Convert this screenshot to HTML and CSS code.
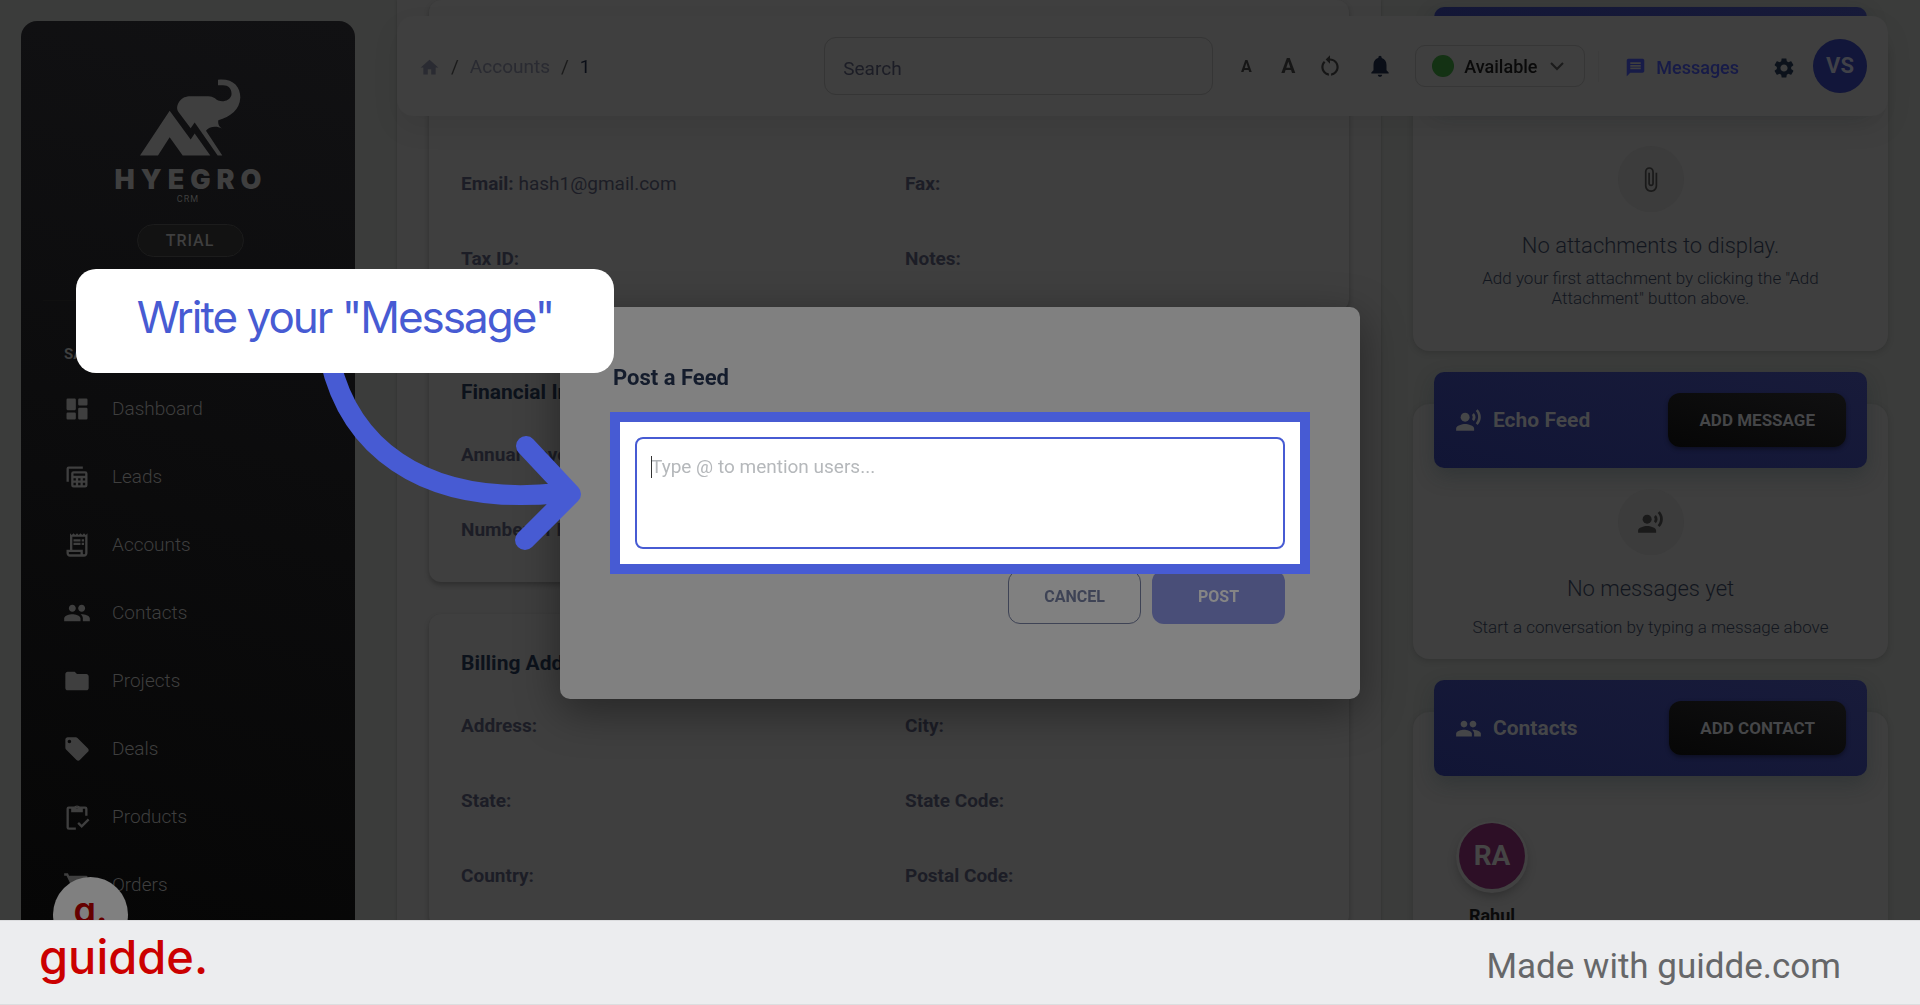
FILE: index.html
```html
<!DOCTYPE html>
<html lang="en">
<head>
  <meta charset="UTF-8">
  <meta name="viewport" content="width=device-width, initial-scale=1">
  <title>Hyegro CRM - Account</title>
  <link rel="stylesheet" href="styles.css">
</head>
<body>
  <!-- shared icons -->
  <svg class="sprite" aria-hidden="true">
    <symbol id="i-people" viewBox="0 0 24 24"><path d="M16 11c1.66 0 2.99-1.34 2.99-3S17.66 5 16 5c-1.66 0-3 1.34-3 3s1.34 3 3 3zm-8 0c1.66 0 2.99-1.34 2.99-3S9.66 5 8 5C6.34 5 5 6.34 5 8s1.34 3 3 3zm0 2c-2.33 0-7 1.17-7 3.5V19h14v-2.5c0-2.33-4.67-3.5-7-3.5zm8 0c-.29 0-.62.02-.97.05 1.16.84 1.97 1.97 1.97 3.45V19h6v-2.5c0-2.33-4.67-3.5-7-3.5z"/></symbol>
    <symbol id="i-voice" viewBox="0 0 24 24"><circle cx="9" cy="9" r="4"/><path d="M9 15c-2.67 0-8 1.34-8 4v2h16v-2c0-2.66-5.33-4-8-4zm7.76-9.64l-1.68 1.69c.84 1.18.84 2.71 0 3.89l1.68 1.69c2.02-2.02 2.02-5.07 0-7.27zM20.07 2l-1.63 1.63c2.77 3.02 2.77 7.56 0 10.74L20.07 16c3.9-3.89 3.91-9.95 0-14z"/></symbol>
  </svg>

  <div class="app">
    <aside class="sidebar">
      <div class="brand">
        <svg class="brand-mark" viewBox="423 237 303 230">
          <path d="M423 466L512 332L575 418L587 400L634 466H551L512 411L477 466Z"/>
          <path d="M657 239C700 234 724 258 724 292C722 330 694 350 658 360C656 372 660 380 669 385C650 376 630 380 621 392L670 466H656L587 367L575 384L540 338C530 326 534 312 544 300C555 289 565 288 580 288H628C645 288 650 298 660 302C676 306 692 300 697 286C700 268 690 255 672 255H657Z"/>
        </svg>
        <span class="brand-name">HYEGRO</span>
        <span class="brand-sub">CRM</span>
      </div>
      <span class="plan">TRIAL</span>
      <hr class="rule">
      <h6 class="nav-title">SALES</h6>
      <nav class="nav">
        <a href="#"><svg viewBox="0 0 24 24"><path d="M4 13h6a1 1 0 0 0 1-1V4a1 1 0 0 0-1-1H4a1 1 0 0 0-1 1v8a1 1 0 0 0 1 1zm0 8h6a1 1 0 0 0 1-1v-4a1 1 0 0 0-1-1H4a1 1 0 0 0-1 1v4a1 1 0 0 0 1 1zm10 0h6a1 1 0 0 0 1-1v-8a1 1 0 0 0-1-1h-6a1 1 0 0 0-1 1v8a1 1 0 0 0 1 1zM13 4v4a1 1 0 0 0 1 1h6a1 1 0 0 0 1-1V4a1 1 0 0 0-1-1h-6a1 1 0 0 0-1 1z"/></svg>Dashboard</a>
        <a href="#"><svg viewBox="0 0 24 24"><path fill="none" stroke="currentColor" stroke-width="2" d="M4 16V5a1 1 0 0 1 1-1h12"/><path fill-rule="evenodd" d="M9 7h10a2 2 0 0 1 2 2v10a2 2 0 0 1-2 2H9a2 2 0 0 1-2-2V9a2 2 0 0 1 2-2zM9 9v2h10V9zM9 13v2h2v-2zm4 0v2h2v-2zm4 0v2h2v-2zM9 17v2h2v-2zm4 0v2h2v-2zm4 0v2h2v-2z"/></svg>Leads</a>
        <a href="#"><svg viewBox="0 0 24 24"><path d="M19.5 3.5L18 2l-1.500 1.500L15 2l-1.500 1.500L12 2l-1.500 1.500L9 2 7.500 3.500 6 2v14H3v3c0 1.660 1.340 3 3 3h12c1.660 0 3-1.340 3-3V2l-1.500 1.500zM15 20H6c-.55 0-1-.45-1-1v-1h10v2zm4-1c0 .55-.45 1-1 1s-1-.45-1-1v-3H8V5h11v14z"/><path d="M9 7h6v2H9zM16 7h2v2h-2zM9 10h6v2H9zM16 10h2v2h-2z"/></svg>Accounts</a>
        <a href="#"><svg><use href="#i-people"/></svg>Contacts</a>
        <a href="#"><svg viewBox="0 0 24 24"><path d="M10 4H4c-1.100 0-1.990.9-1.990 2L2 18c0 1.100.9 2 2 2h16c1.100 0 2-.9 2-2V8c0-1.100-.9-2-2-2h-8l-2-2z"/></svg>Projects</a>
        <a href="#"><svg viewBox="0 0 24 24"><path d="M21.410 11.580l-9-9C12.050 2.220 11.550 2 11 2H4c-1.100 0-2 .9-2 2v7c0 .55.22 1.050.59 1.420l9 9c.36.36.86.58 1.410.58.55 0 1.050-.22 1.410-.59l7-7c.37-.36.59-.86.59-1.410 0-.55-.23-1.060-.59-1.420zM5.500 7C4.670 7 4 6.330 4 5.500S4.670 4 5.500 4 7 4.670 7 5.500 6.330 7 5.500 7z"/></svg>Deals</a>
        <a href="#"><svg viewBox="0 0 24 24"><path fill="none" stroke="currentColor" stroke-width="2" d="M11 22H5a1 1 0 0 1-1-1V5a1 1 0 0 1 1-1h14a1 1 0 0 1 1 1v6M13 17l3 3 6-6"/><path fill-rule="evenodd" d="M7 4h2.200a3 3 0 0 1 5.600 0H17v4H7zm5-1a1 1 0 1 0 0 2 1 1 0 0 0 0-2z"/></svg>Products</a>
        <a href="#"><svg viewBox="0 0 24 24"><path d="M7 18c-1.100 0-1.990.9-1.990 2S5.900 22 7 22s2-.9 2-2-.9-2-2-2zM1 2v2h2l3.600 7.590-1.350 2.450c-.16.28-.25.61-.25.96 0 1.100.9 2 2 2h12v-2H7.420c-.14 0-.25-.11-.25-.25l.03-.12.9-1.630h7.450c.75 0 1.410-.41 1.750-1.030l3.580-6.490A1 1 0 0 0 20 4H5.210l-.94-2H1zm16 16c-1.100 0-1.990.9-1.990 2s.89 2 1.990 2 2-.9 2-2-.9-2-2-2z"/></svg>Orders</a>
      </nav>
    </aside>

    <div class="workspace">
      <header class="topbar">
        <nav class="crumbs">
          <a href="#" aria-label="Home"><svg viewBox="0 0 24 24"><path d="M10 20v-6h4v6h5v-8h3L12 3 2 12h3v8z"/></svg></a>
          <span>/</span>
          <a href="#">Accounts</a>
          <span>/</span>
          <b>1</b>
        </nav>
        <input class="search" type="search" placeholder="Search" aria-label="Search">
        <div class="tools">
          <button class="tool font-small" type="button">A</button>
          <button class="tool font-large" type="button">A</button>
          <button class="tool" type="button" aria-label="Reset"><svg viewBox="0 0 24 24"><path d="M12 5V2L8 6l4 4V7c3.310 0 6 2.690 6 6 0 2.970-2.170 5.430-5 5.910v2.020c3.950-.49 7-3.850 7-7.930 0-4.420-3.580-8-8-8zM6 13c0-1.650.67-3.150 1.760-4.240L6.340 7.340C4.900 8.790 4 10.790 4 13c0 4.080 3.050 7.440 7 7.930v-2.020c-2.830-.48-5-2.940-5-5.910z"/></svg></button>
          <button class="tool bell" type="button" aria-label="Notifications"><svg viewBox="0 0 24 24"><path d="M12 22c1.100 0 2-.9 2-2h-4c0 1.100.89 2 2 2zm6-6v-5c0-3.070-1.640-5.640-4.500-6.320V4c0-.83-.67-1.500-1.500-1.500s-1.500.67-1.500 1.500v.68C7.630 5.360 6 7.920 6 11v5l-2 2v1h16v-1l-2-2z"/></svg></button>
        </div>
        <label class="status">
          <i class="dot"></i>
          <select aria-label="Status">
            <option>Available</option>
            <option>Away</option>
          </select>
          <svg viewBox="0 0 14 9"><path d="M1 1l6 6 6-6"/></svg>
        </label>
        <a class="messages" href="#"><svg viewBox="0 0 24 24"><path d="M20 2H4c-1.100 0-1.990.9-1.990 2L2 22l4-4h14c1.100 0 2-.9 2-2V4c0-1.100-.9-2-2-2zm-2 12H6v-2h12v2zm0-3H6V9h12v2zm0-3H6V6h12v2z"/></svg>Messages</a>
        <button class="tool gear" type="button" aria-label="Settings"><svg viewBox="0 0 24 24"><path d="M19.140 12.940c.04-.3.06-.61.06-.94 0-.32-.02-.64-.07-.94l2.030-1.580c.18-.14.23-.41.12-.61l-1.920-3.320c-.12-.22-.37-.29-.59-.22l-2.390.96c-.5-.38-1.030-.7-1.620-.94l-.36-2.540c-.04-.24-.24-.41-.48-.41h-3.840c-.24 0-.43.17-.47.41l-.36 2.540c-.59.24-1.130.57-1.620.94l-2.390-.96c-.22-.08-.47 0-.59.22L2.740 8.870c-.12.21-.08.47.12.61l2.030 1.580c-.05.3-.09.63-.09.94s.02.64.07.94l-2.030 1.580c-.18.14-.23.41-.12.61l1.920 3.320c.12.22.37.29.59.22l2.390-.96c.5.38 1.030.7 1.620.94l.36 2.540c.05.24.24.41.48.41h3.840c.24 0 .44-.17.47-.41l.36-2.540c.59-.24 1.130-.56 1.620-.94l2.390.96c.22.08.47 0 .59-.22l1.920-3.320c.12-.22.07-.47-.12-.61l-2.010-1.580zM12 15.600c-1.980 0-3.600-1.620-3.600-3.600s1.620-3.600 3.600-3.600 3.600 1.620 3.600 3.600-1.620 3.600-3.600 3.600z"/></svg></button>
        <span class="user">VS</span>
      </header>

      <main class="details">
        <section class="panel panel-top">
          <dl class="fields">
            <div><dt>Email:</dt> <dd>hash1@gmail.com</dd></div>
            <div><dt>Fax:</dt></div>
            <div><dt>Tax ID:</dt></div>
            <div><dt>Notes:</dt></div>
          </dl>
        </section>
        <section class="panel">
          <h2>Financial Information</h2>
          <dl class="fields">
            <div><dt>Annual Revenue:</dt></div>
            <div></div>
            <div><dt>Number of Employees:</dt></div>
            <div></div>
          </dl>
        </section>
        <section class="panel">
          <h2>Billing Address</h2>
          <dl class="fields">
            <div><dt>Address:</dt></div>
            <div><dt>City:</dt></div>
            <div><dt>State:</dt></div>
            <div><dt>State Code:</dt></div>
            <div><dt>Country:</dt></div>
            <div><dt>Postal Code:</dt></div>
          </dl>
        </section>
      </main>

      <aside class="cards">
        <section class="card card-attach">
          <div class="card-bar"></div>
          <div class="empty">
            <span class="empty-icon"><svg viewBox="0 0 24 24"><path d="M16.500 6v11.500c0 2.210-1.790 4-4 4s-4-1.790-4-4V5c0-1.380 1.120-2.500 2.500-2.500s2.500 1.120 2.500 2.500v10.500c0 .55-.45 1-1 1s-1-.45-1-1V6H10v9.500c0 1.380 1.120 2.500 2.500 2.500s2.500-1.120 2.500-2.500V5c0-2.210-1.790-4-4-4S7 2.790 7 5v12.500c0 3.040 2.460 5.500 5.500 5.500s5.500-2.460 5.500-5.500V6h-1.500z"/></svg></span>
            <h3>No attachments to display.</h3>
            <p>Add your first attachment by clicking the "Add Attachment" button above.</p>
          </div>
        </section>
        <section class="card card-feed">
          <div class="card-bar">
            <svg><use href="#i-voice"/></svg>
            <h2>Echo Feed</h2>
            <button type="button">ADD MESSAGE</button>
          </div>
          <div class="empty">
            <span class="empty-icon"><svg><use href="#i-voice"/></svg></span>
            <h3>No messages yet</h3>
            <p>Start a conversation by typing a message above</p>
          </div>
        </section>
        <section class="card">
          <div class="card-bar">
            <svg><use href="#i-people"/></svg>
            <h2>Contacts</h2>
            <button type="button">ADD CONTACT</button>
          </div>
          <div class="contact">
            <span class="contact-avatar">RA</span>
            <span>Rahul</span>
          </div>
        </section>
      </aside>
    </div>

    <div class="widget">g.</div>
  </div>

  <div class="overlay">
    <form class="modal" role="dialog" aria-labelledby="feed-title">
      <h2 id="feed-title">Post a Feed</h2>
      <div class="highlight">
        <textarea placeholder="Type @ to mention users..." aria-label="Message"></textarea>
        <i class="caret"></i>
      </div>
      <div class="actions">
        <button class="cancel" type="button">CANCEL</button>
        <button class="post" type="submit">POST</button>
      </div>
    </form>
  </div>

  <!-- walkthrough hint -->
  <svg class="arrow" viewBox="310 360 280 200">
    <path d="M330 360C348 440 415 508 560 493M526 446L571 494L525 540"/>
  </svg>
  <div class="hint">Write your "Message"</div>

  <footer class="footer">
    <a class="guidde" href="#">guidde.</a>
    <span>Made with guidde.com</span>
  </footer>
</body>
</html>
```
FILE: styles.css
```css
* { box-sizing: border-box; }
body {
  margin: 0; height: 100vh; overflow: hidden; display: flex; flex-direction: column;
  background: #3b3c3b; color: #1c1d26; font: 18px/28px Roboto, sans-serif;
}
h2, h3, h6, p, dl, dd { margin: 0; }
a { color: inherit; text-decoration: none; }
button, input, select, textarea { font-family: inherit; color: inherit; }
button { cursor: pointer; }
svg { fill: currentColor; flex: none; }
.sprite { position: absolute; width: 0; height: 0; }

.app { position: relative; flex: 1; min-height: 0; overflow: hidden; display: flex; }

/* sidebar */
.sidebar {
  width: 334px; flex: none; margin: 21px 42px 0 21px; border-radius: 16px 16px 0 0;
  background: linear-gradient(195deg, #111113, #060606); color: #3f3f3f;
  display: flex; flex-direction: column; align-items: center; overflow: hidden;
}
.brand { display: flex; flex-direction: column; align-items: center; margin-top: 58px; }
.brand-mark { width: 101px; height: 77px; margin-left: 6px; }
.brand-name { font: 900 27px/27px Inter, sans-serif; letter-spacing: 6px; margin-top: 10px; margin-left: 6px; }
.brand-sub { font-size: 9px; line-height: 12px; letter-spacing: 1px; }
.plan {
  width: 107px; margin: 19px 0 0 4px; border: 1px solid #1c1c1c; border-radius: 17px;
  background: #121212; text-align: center; font-size: 16px; font-weight: 500; line-height: 31px; letter-spacing: 1px;
}
.rule { width: 290px; margin: 43px 0; border: 0; border-top: 1px solid #101010; }
.nav-title { align-self: flex-start; margin-left: 43px; font-size: 15px; line-height: 20px; }
.nav { align-self: stretch; display: flex; flex-direction: column; gap: 28px; margin-top: 25px; padding-left: 42px; }
.nav a { display: flex; align-items: center; gap: 21px; height: 40px; font-size: 19px; font-weight: 300; }
.nav svg { width: 28px; height: 28px; }

/* page */
.workspace {
  position: relative; flex: 1; min-width: 0; margin-right: 32px;
  display: grid; grid-template-columns: minmax(0, 1fr) 475px; gap: 32px; align-items: start;
}
.topbar {
  position: absolute; top: 16px; left: 0; right: 0; z-index: 1; height: 100px; padding: 0 21px 0 22px;
  display: flex; align-items: center; border-radius: 16px; background: #3f3f3f;
  box-shadow: 0 12px 28px rgba(0, 0, 0, .07);
}
.crumbs { display: flex; align-items: center; gap: 11px; flex: 1; padding-top: 2px; color: #2a2b32; font-size: 19px; }
.crumbs a { display: flex; }
.crumbs svg { width: 21px; height: 21px; }
.crumbs span { color: #1b1b1b; }
.crumbs b { font-weight: 400; color: #0a0e17; }
.search {
  width: 389px; height: 58px; padding: 4px 18px 0; border: 1px solid #353535; border-radius: 12px;
  background: none; font-size: 19px;
}
.search::placeholder { color: #1c1d26; }
.tools { display: flex; align-items: center; gap: 12px; margin-left: 18px; }
.tool { width: 30px; height: 30px; padding: 0; border: 0; background: none; color: #161616; display: grid; place-items: center; font-weight: 700; }
.tool svg { width: 26px; height: 26px; }
.font-small { font-size: 16px; }
.font-large { font-size: 21px; }
.bell { margin-left: 8px; color: #0a0e17; }
.status {
  width: 170px; height: 42px; margin-left: 20px; padding: 0 20px 0 16px; border: 1px solid #363636; border-radius: 10px;
  display: flex; align-items: center; gap: 10px; color: #0a0a0a;
}
.dot { width: 22px; height: 22px; border-radius: 50%; background: #143214; }
.status select { appearance: none; flex: 1; min-width: 0; border: 0; padding: 0; background: none; font-size: 18px; font-weight: 500; }
.status svg { width: 14px; height: 9px; fill: none; stroke: #1b1b1b; stroke-width: 2; }
.messages { display: flex; align-items: center; gap: 10px; margin-left: 13px; padding: 3px 0 0 26px; border-left: 1px solid #3c3c3c; color: #171b48; font-weight: 500; }
.messages svg { width: 21px; height: 21px; }
.gear { margin: 3px 0 0 30px; color: #0c121b; }
.gear svg { width: 24px; height: 24px; }
.user {
  width: 54px; height: 54px; margin-left: 14px; border-radius: 50%; background: #12163a; color: #404148;
  display: grid; place-items: center; font-size: 22px; font-weight: 700;
}

.details { padding: 0 32px 32px; background: #3e3e3e; box-shadow: 0 0 3px rgba(0, 0, 0, .2); display: flex; flex-direction: column; gap: 32px; }
.panel { padding: 32px 32px 38px; border-radius: 12px; background: #3f3f3f; box-shadow: 0 3px 5px rgba(0, 0, 0, .25); }
.panel-top { padding-top: 170px; }
.panel h2 { margin-bottom: 32px; color: #0c121b; font-size: 21px; line-height: 34px; font-weight: 700; }
.fields { display: grid; grid-template-columns: 1fr 1fr; gap: 47px 32px; font-size: 19px; }
.fields div { height: 28px; white-space: nowrap; }
.fields dt, .fields dd { display: inline; }
.fields dt { font-weight: 700; }

/* right column */
.cards { display: flex; flex-direction: column; gap: 53px; }
.card { padding: 0 21px 32px; border-radius: 16px; background: #3f3f3f; box-shadow: 0 2px 6px rgba(0, 0, 0, .15); }
.card-attach { margin-top: 39px; height: 312px; }
.card-feed { height: 255px; }
.card-bar {
  height: 96px; margin-top: -32px; padding: 0 21px; border-radius: 10px; display: flex; align-items: center;
  background: linear-gradient(195deg, #181b3a, #111535); color: #454648;
  box-shadow: 0 8px 20px rgba(20, 32, 36, .3);
}
.card-bar svg { width: 27px; height: 27px; }
.card-bar h2 { flex: 1; margin-left: 11px; font-size: 21px; font-weight: 700; }
.card-bar button {
  height: 54px; padding: 0 31px; border: 0; border-radius: 12px; background: linear-gradient(195deg, #101011, #060606);
  font-size: 17px; font-weight: 700; box-shadow: 0 2px 4px rgba(0, 0, 0, .4);
}
.empty { display: flex; flex-direction: column; align-items: center; margin-top: 21px; text-align: center; color: #12161e; font-weight: 300; }
.card-attach .empty { margin-top: 43px; }
.empty-icon { width: 66px; height: 66px; border-radius: 50%; background: #3c3c3c; color: #1a1a1a; display: grid; place-items: center; }
.empty-icon svg { width: 27px; height: 27px; }
.empty h3 { margin-top: 19px; font-size: 22px; line-height: 30px; font-weight: 300; }
.empty p { margin-top: 7px; padding: 0 40px; font-size: 17px; line-height: 20px; }
.card-feed p { margin-top: 13px; padding: 0; }
.contact { width: 90px; margin-top: 47px; margin-left: 13px; display: flex; flex-direction: column; align-items: center; gap: 13px; color: #0a0a0a; font-weight: 700; }
.contact-avatar {
  width: 66px; height: 66px; border-radius: 50%; background: #2d0f26; color: #454545;
  display: grid; place-items: center; font-size: 28px; font-weight: 700;
  box-shadow: 0 1px 0 3px #414141, 0 6px 12px rgba(0, 0, 0, .3);
}

.widget {
  position: absolute; left: 53px; bottom: -32px; width: 75px; height: 75px; border-radius: 50%;
  background: #808080; color: #650000; text-align: center; font: 600 36px/66px Inter, sans-serif;
}

/* dialog */
.overlay { position: fixed; inset: 0; display: grid; place-items: center; }
.modal { width: 800px; padding: 56px 50px 75px; border-radius: 10px; background: #808080; box-shadow: 0 12px 44px rgba(0, 0, 0, .4); }
.modal h2 { padding-left: 3px; color: #141c2c; font-size: 22px; line-height: 30px; font-weight: 700; }
.highlight { position: relative; z-index: 1; margin-top: 19px; padding: 15px; border: 10px solid #475bd3; background: #fff; }
.highlight textarea {
  display: block; width: 100%; height: 112px; padding: 14px; border: 2px solid #475bd3; border-radius: 8px;
  resize: none; outline: 0; background: none; font-size: 19px; line-height: 28px;
}
.highlight textarea::placeholder { color: #b5b8bb; }
.caret { position: absolute; top: 34px; left: 31px; width: 1px; height: 22px; background: #333; }
.actions { display: flex; justify-content: flex-end; gap: 11px; margin-top: -4px; padding-right: 25px; }
.actions button { width: 133px; height: 54px; border-radius: 12px; font-size: 16px; font-weight: 700; }
.cancel { border: 1px solid #3e4355; background: none; color: #3e4355; }
.post { border: 0; background: #494e78; color: #858585; }

.hint {
  position: absolute; left: 76px; top: 269px; width: 538px; height: 104px; border-radius: 20px; background: #fff;
  color: #475bd3; text-align: center; font: 400 44px/96px Inter, sans-serif; letter-spacing: -2px;
}
.arrow { position: absolute; left: 310px; top: 360px; width: 280px; height: 200px; fill: none; stroke: #475bd3; stroke-width: 20px; stroke-linecap: round; stroke-linejoin: round; }

.footer {
  position: relative; height: 85px; flex: none; padding: 0 79px 0 39px; display: flex; align-items: center; justify-content: space-between;
  border-top: 1px solid #dcdddf; border-bottom: 1px solid #dcdddf; background: #ecedef; color: #666769; font-size: 35px;
}
.footer span { padding-top: 8px; }
.guidde { margin-bottom: 11px; color: #cb0000; font: 500 47px/56px Inter, sans-serif; }
```
